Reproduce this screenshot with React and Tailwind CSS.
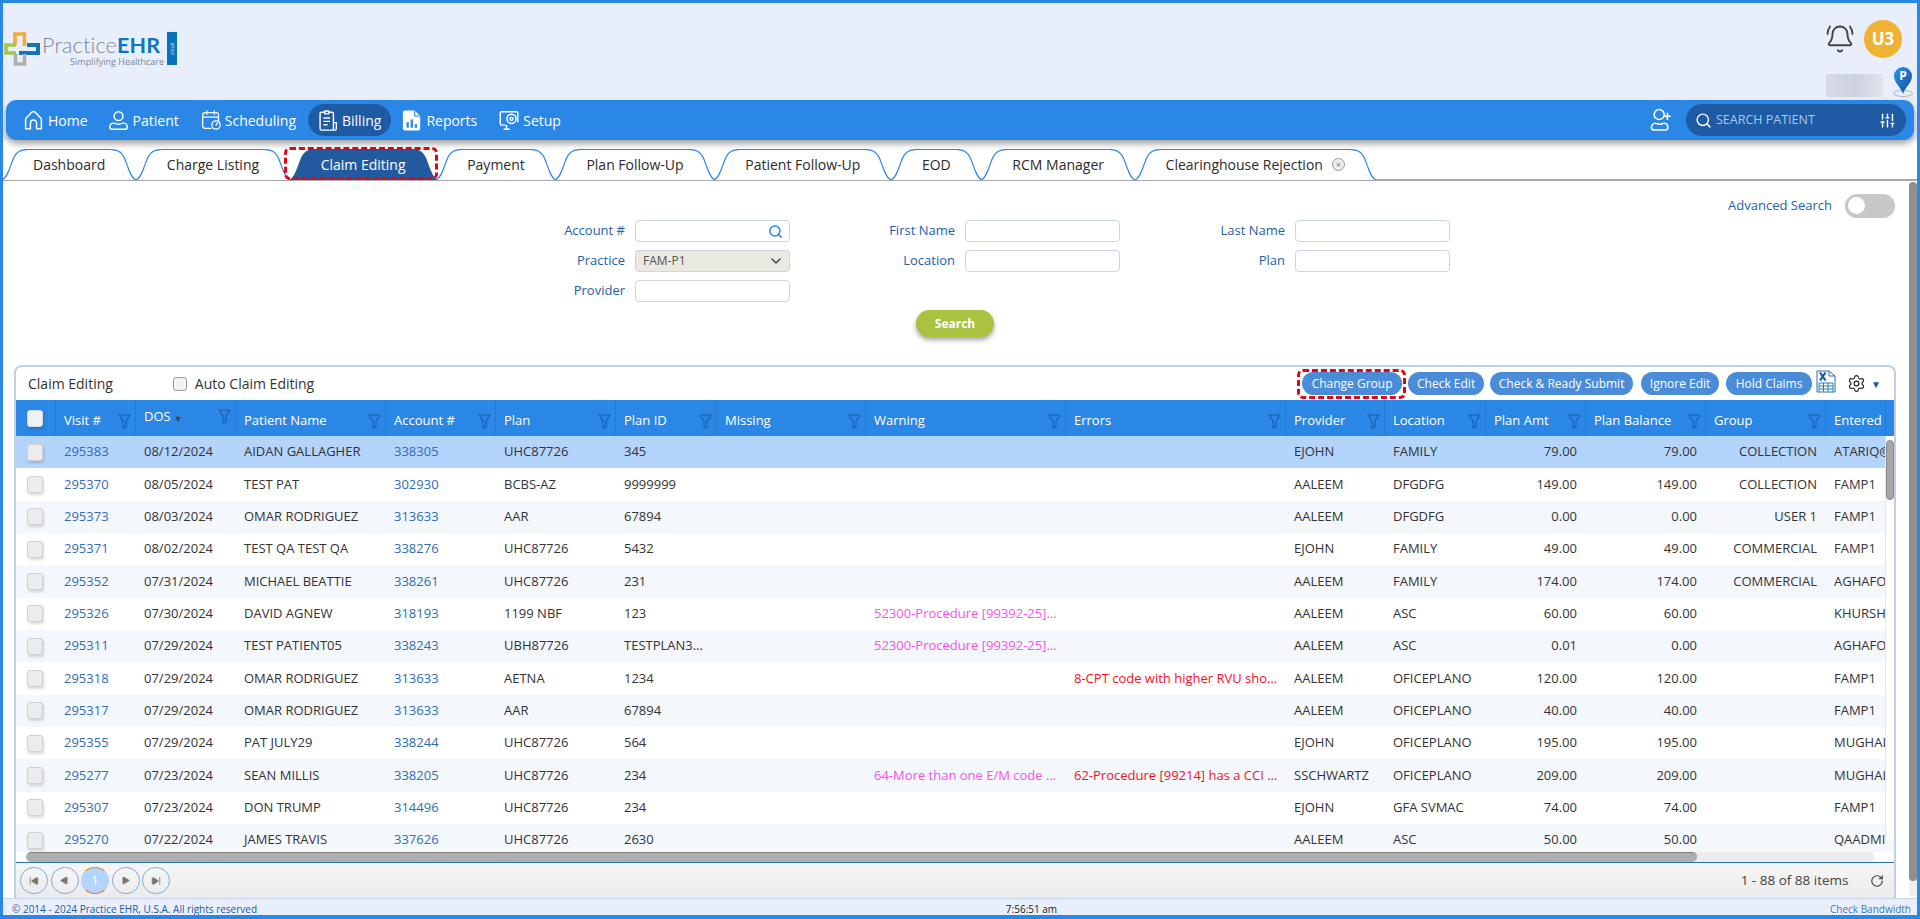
import React from "react";
import { BellRing, ChevronDown, Search, Settings, SlidersVertical, RotateCw, SkipBack, Play } from "lucide-react";

const GRID = "grid grid-cols-[40px_80px_100px_150px_110px_120px_101px_149px_200px_220px_99px_101px_100px_120px_120px_60px_1fr]";

const WARN = "52300-Procedure [99392-25]…";
const rows = [
  ["295383", "08/12/2024", "AIDAN GALLAGHER", "338305", "UHC87726", "345", "", "", "", "EJOHN", "FAMILY", "79.00", "79.00", "COLLECTION", "ATARIQ@PRACTICE"],
  ["295370", "08/05/2024", "TEST PAT", "302930", "BCBS-AZ", "9999999", "", "", "", "AALEEM", "DFGDFG", "149.00", "149.00", "COLLECTION", "FAMP1"],
  ["295373", "08/03/2024", "OMAR RODRIGUEZ", "313633", "AAR", "67894", "", "", "", "AALEEM", "DFGDFG", "0.00", "0.00", "USER 1", "FAMP1"],
  ["295371", "08/02/2024", "TEST QA TEST QA", "338276", "UHC87726", "5432", "", "", "", "EJOHN", "FAMILY", "49.00", "49.00", "COMMERCIAL", "FAMP1"],
  ["295352", "07/31/2024", "MICHAEL BEATTIE", "338261", "UHC87726", "231", "", "", "", "AALEEM", "FAMILY", "174.00", "174.00", "COMMERCIAL", "AGHAFOOR"],
  ["295326", "07/30/2024", "DAVID AGNEW", "318193", "1199 NBF", "123", "", WARN, "", "AALEEM", "ASC", "60.00", "60.00", "", "KHURSHID"],
  ["295311", "07/29/2024", "TEST PATIENT05", "338243", "UBH87726", "TESTPLAN3…", "", WARN, "", "AALEEM", "ASC", "0.01", "0.00", "", "AGHAFOOR"],
  ["295318", "07/29/2024", "OMAR RODRIGUEZ", "313633", "AETNA", "1234", "", "", "8-CPT code with higher RVU sho…", "AALEEM", "OFICEPLANO", "120.00", "120.00", "", "FAMP1"],
  ["295317", "07/29/2024", "OMAR RODRIGUEZ", "313633", "AAR", "67894", "", "", "", "AALEEM", "OFICEPLANO", "40.00", "40.00", "", "FAMP1"],
  ["295355", "07/29/2024", "PAT JULY29", "338244", "UHC87726", "564", "", "", "", "EJOHN", "OFICEPLANO", "195.00", "195.00", "", "MUGHAL"],
  ["295277", "07/23/2024", "SEAN MILLIS", "338205", "UHC87726", "234", "", "64-More than one E/M code …", "62-Procedure [99214] has a CCI …", "SSCHWARTZ", "OFICEPLANO", "209.00", "209.00", "", "MUGHAL"],
  ["295307", "07/23/2024", "DON TRUMP", "314496", "UHC87726", "234", "", "", "", "EJOHN", "GFA SVMAC", "74.00", "74.00", "", "FAMP1"],
  ["295270", "07/22/2024", "JAMES TRAVIS", "337626", "UHC87726", "2630", "", "", "", "AALEEM", "ASC", "50.00", "50.00", "", "QAADMIN"],
];

const headers = ["Visit #", "DOS", "Patient Name", "Account #", "Plan", "Plan ID", "Missing", "Warning", "Errors", "Provider", "Location", "Plan Amt", "Plan Balance", "Group", "Entered"];

const tabs = ["Dashboard", "Charge Listing", "Claim Editing", "Payment", "Plan Follow-Up", "Patient Follow-Up", "EOD", "RCM Manager", "Clearinghouse Rejection"];

function HomeIcon() {
  return (
    <svg width="21" height="22" viewBox="0 0 24 24" fill="none" stroke="white" strokeWidth="1.7" strokeLinejoin="round">
      <path d="M3 22V10.5L10 3.2a2.8 2.8 0 0 1 4 0l7 7.3V22h-5.5v-6.5a3.5 3.5 0 0 0-7 0V22z" />
    </svg>
  );
}
function UserIcon({ size = 21 }) {
  return (
    <svg width={size} height={size} viewBox="0 0 24 24" fill="none" stroke="white" strokeWidth="1.7">
      <circle cx="12" cy="7" r="5" />
      <path d="M2 19.5c0-3 2.5-4.500 5-4.500 1.500 0 3 1.200 5 1.200s3.500-1.200 5-1.200c2.500 0 5 1.500 5 4.500 0 1.500-1 2.500-2.500 2.500h-15C3 22 2 21 2 19.500z" />
    </svg>
  );
}
function ScheduleIcon() {
  return (
    <svg width="20" height="22" viewBox="0 0 24 24" fill="none" stroke="white" strokeWidth="1.5" strokeLinecap="round">
      <path d="M12 22H5a3 3 0 0 1-3-3V6a3 3 0 0 1 3-3h13a3 3 0 0 1 3 3v7" />
      <path d="M2 8.500h19M7 1v4M16 1v4" />
      <circle cx="18" cy="18" r="5" />
      <path d="M18 18l2-2.500" />
    </svg>
  );
}
function BillingIcon() {
  return (
    <svg width="20" height="23" viewBox="0 0 24 26" fill="none" stroke="white" strokeWidth="1.7" strokeLinejoin="round">
      <path d="M8 3H4a1.500 1.500 0 0 0-1.500 1.500V23A1.500 1.500 0 0 0 4 24.500h13A1.500 1.500 0 0 0 18.500 23V4.500A1.500 1.500 0 0 0 17 3h-4" />
      <path d="M8 1.500h5V5H8z" />
      <path d="M6.500 10h8M6.500 14h8M6.500 18h5" />
      <path d="M18.500 15.500h3.500V23a1.500 1.500 0 0 1-1.500 1.500H18" />
    </svg>
  );
}
function ReportsIcon() {
  return (
    <svg width="20" height="23" viewBox="0 0 22 24">
      <path d="M3 1h11l6 6v14a2 2 0 0 1-2 2H3a2 2 0 0 1-2-2V3a2 2 0 0 1 2-2z" fill="white" />
      <path d="M14 1v6h6" fill="none" stroke="#2b87e6" strokeWidth="1.2" />
      <path d="M5 14h2.500v6H5zM9.500 11H12v9H9.500zM14 16h2.500v4H14z" fill="#2b87e6" />
    </svg>
  );
}
function SetupIcon() {
  return (
    <svg width="20" height="23" viewBox="0 0 24 24" fill="none" stroke="white" strokeWidth="1.7" strokeLinejoin="round">
      <path d="M8 17.500H3a1.500 1.500 0 0 1-1.500-1.500V3A1.500 1.500 0 0 1 3 1.500h18A1.500 1.500 0 0 1 22.500 3v11" />
      <circle cx="15" cy="10" r="5.500" />
      <circle cx="15" cy="10" r="1.800" />
      <path d="M9 17.500v4M5.500 22.500H13" />
    </svg>
  );
}
function AddUserIcon() {
  return (
    <svg width="22" height="24" viewBox="0 0 24 26" fill="none" stroke="white" strokeWidth="1.700">
      <circle cx="10" cy="7" r="5.500" />
      <path d="M1.500 21c0-3 2.500-4.500 4.500-4.500 1.500 0 2.500 1.200 4.500 1.200s3-1.200 4.500-1.200c2.500 0 4.500 1.500 4.500 4.500 0 2-1 3-2.500 3H4c-1.500 0-2.500-1-2.500-3z" />
      <path d="M19 5v8M15.500 9h7" />
    </svg>
  );
}
function Funnel({ className = "" }) {
  return (
    <svg width="13" height="15" viewBox="0 0 14 16" fill="none" stroke="#1c5eaa" strokeWidth="1.300" strokeLinejoin="round" className={className}>
      <path d="M1 1h12L8.500 7.500V14l-3 1V7.500z" />
    </svg>
  );
}
function Excel() {
  return (
    <svg width="20" height="23" viewBox="0 0 20 23" fill="none">
      <path d="M1 1h12l6 5v16H1z" fill="#fff" stroke="#2a6fb0" strokeWidth="1" />
      <path d="M13 1v5h6" stroke="#2a6fb0" strokeWidth="1" />
      <path d="M4 2.500l5.500 8M9.500 2.500L4 10.500" stroke="#14589f" strokeWidth="2.200" />
      <path d="M3 13h14M3 16h14M3 19h14M3 13v8.500M7.500 13v8.500M12 13v8.500M17 13v8.500" stroke="#2a7ab8" strokeWidth="1" />
    </svg>
  );
}
function Pin() {
  return (
    <svg width="20" height="31" viewBox="0 0 20 31">
      <defs>
        <linearGradient id="pinGrad" x1="0" x2="1" y1="0" y2="1">
          <stop offset="0" stopColor="#2b93e6" />
          <stop offset="1" stopColor="#124f96" />
        </linearGradient>
      </defs>
      <ellipse cx="10" cy="27.500" rx="9.500" ry="3" fill="none" stroke="#9aa3b0" strokeWidth="0.800" />
      <path d="M10 28C8 21 1 17 1 10a9 9 0 0 1 18 0c0 7-7 11-9 18z" fill="url(#pinGrad)" />
      <text x="10" y="14" textAnchor="middle" fontSize="12" fontWeight="700" fill="#fff" fontFamily="Open Sans">P</text>
    </svg>
  );
}
function LogoCross() {
  return (
    <svg width="36" height="34" viewBox="0 0 36 34" fill="none" strokeWidth="3.600">
      <path d="M11 13V2h9.500v12" stroke="#f5a93b" />
      <path d="M12 13H2v8h10" stroke="#a4c93f" />
      <path d="M15 21h19v-8H23" stroke="#1773b8" strokeWidth="4" />
      <path d="M11.500 22v10h9v-10" stroke="#b0b0b0" />
    </svg>
  );
}

function NavItem({ icon, label, active, className = "" }) {
  return (
    <div className={"flex items-center gap-[4px] h-[32px] text-[14px] text-white " + (active ? "bg-[#1f5aa5] rounded-full px-[10px] " : "") + className}>
      {icon}
      <span>{label}</span>
    </div>
  );
}

function TabItem({ label, active, close, first }) {
  const stroke = "#2b87e6";
  const fill = active ? "#23599f" : "#ffffff";
  return (
    <div className={"flex h-[31px] -mr-[0.4px] " + (first ? "-ml-[1px]" : "")}>
      <svg width="25" height="31" viewBox="0 0 25 31" className="shrink-0">
        <path d="M0 31C5 29 7 21 10 13 13 4 17 .6 25 .6V31z" fill={fill} />
        <path d="M0 31C5 29 7 21 10 13 13 4 17 .6 25 .6" fill="none" stroke={active ? fill : stroke} strokeWidth="1.200" />
      </svg>
      <div className={"flex items-center gap-[9px] px-[6px] pb-[2px] border-t-[1.200px] text-[14px] " + (active ? "bg-[#23599f] border-[#23599f] text-white" : "bg-white border-[#2b87e6] text-[#2b2b2b]")}>
        <span>{label}</span>
        {close && (
          <span className="w-[13px] h-[13px] rounded-full border border-[#9a9a9a] bg-[#ededed] flex items-center justify-center text-[9px] leading-none text-[#777]">×</span>
        )}
      </div>
      <svg width="25" height="31" viewBox="0 0 25 31" className="shrink-0">
        <path d="M0 .6C8 .6 12 4 15 13 18 21 20 29 25 31H0z" fill={fill} />
        <path d="M0 .6C8 .6 12 4 15 13 18 21 20 29 25 31" fill="none" stroke={active ? fill : stroke} strokeWidth="1.200" />
      </svg>
    </div>
  );
}

function Field({ label, children }) {
  return (
    <div className="flex items-center">
      <label className="w-[165px] text-right text-[13px] text-[#2561a9] pr-[10px]">{label}</label>
      {children}
    </div>
  );
}
const inputCls = "w-[155px] h-[22px] border border-[#ccd3e6] rounded-[4px] bg-white";

function ToolBtn({ label, w }) {
  return (
    <button className={"h-[23px] rounded-full bg-[#4a8cd8] text-white text-[12px] flex items-center justify-center " + w}>{label}</button>
  );
}

function Check({ header }) {
  return (
    <span className={"block w-[16px] h-[17px] rounded-[3px] border shadow-[1px_2px_3px_rgba(0,0,0,0.15)] " + (header ? "bg-[#eef1f5] border-[#d5dae2]" : "bg-[#ececec] border-[#d0d0d0]")} />
  );
}

function PageBtn({ children, active }) {
  return (
    <div className={"w-[28px] h-[27px] rounded-full flex items-center justify-center " + (active ? "bg-[#b3d4fc] border border-[#f07a2a] border-x-[#b3d4fc] text-white text-[13px]" : "border border-[#7fa8d8]")}>
      {children}
    </div>
  );
}

export default function App() {
  return (
    <div className="w-[1920px] h-[919px] overflow-hidden border-[3px] border-b-4 border-[#2b87e6] bg-[#e8effb] flex flex-col font-['Open_Sans',sans-serif] relative">
      {/* Header */}
      <div className="h-[97px] shrink-0 flex justify-between">
        <div className="flex items-start pt-[29px] pl-[1px]">
          <LogoCross />
          <div className="flex flex-col ml-[2px] w-[122px] pt-[3px]">
            <div className="flex items-baseline leading-[20px] h-[21px] text-[21.500px] font-['Lato',sans-serif] tracking-[0.2px]">
              <span className="text-[#7d8791] font-light">Practice</span>
              <span className="text-[#0f75bc] font-bold">EHR</span>
            </div>
            <div className="text-[9px] leading-[11px] text-[#7d8791] text-right">Simplifying Healthcare</div>
          </div>
          <div className="ml-[3px] w-[10px] h-[33px] bg-[#0a72ba] flex items-center justify-center overflow-hidden">
            <span className="text-[5px] text-[#cfe6f7] -rotate-90 whitespace-nowrap">cloud</span>
          </div>
        </div>
        <div className="flex flex-col items-end pr-[4px] pt-[17px]">
          <div className="flex items-center gap-[9px] pr-[11px]">
            <BellRing size={30} strokeWidth={1.500} className="text-[#444]" />
            <div className="w-[38px] h-[38px] rounded-full bg-[#f0b233] flex items-center justify-center text-white font-bold text-[17px]">U3</div>
          </div>
          <div className="flex items-end gap-[10px] mt-[8px]">
            <div className="w-[57px] h-[23px] bg-gradient-to-r from-[#d6dbe6] via-[#ccd2df] to-[#dfe3ec]" />
            <Pin />
          </div>
        </div>
      </div>

      {/* Nav */}
      <div className="h-[40px] shrink-0 mx-[3px] bg-[#2b87e6] rounded-[10px] shadow-[0_4px_6px_rgba(0,0,0,0.35)] flex items-center justify-between pl-[17px] pr-[8px] relative z-10">
        <div className="flex items-center">
          <NavItem icon={<HomeIcon />} label="Home" />
          <NavItem icon={<UserIcon />} label="Patient" className="ml-[20px]" />
          <NavItem icon={<ScheduleIcon />} label="Scheduling" className="ml-[22px]" />
          <NavItem icon={<BillingIcon />} label="Billing" active className="ml-[12px]" />
          <NavItem icon={<ReportsIcon />} label="Reports" className="ml-[11px]" />
          <NavItem icon={<SetupIcon />} label="Setup" className="ml-[22px]" />
        </div>
        <div className="flex items-center gap-[14px]">
          <AddUserIcon />
          <div className="w-[220px] h-[32px] rounded-full bg-[#1f5aa5] flex items-center pl-[9px] pr-[10px] text-white">
            <Search size={17} strokeWidth={2} />
            <span className="ml-[4px] text-[12.500px] text-[#a9c8ee]">SEARCH PATIENT</span>
            <SlidersVertical size={17} strokeWidth={2} className="ml-auto" />
          </div>
        </div>
      </div>

      {/* Main */}
      <div className="flex-1 bg-white flex flex-col min-h-0 relative">
        <div className="flex pt-[9px] h-[41px] shrink-0 border-b-2 border-[#a8a8a8] bg-white">
          {tabs.map((t, i) => (
            <TabItem key={t} label={t} active={t === "Claim Editing"} close={i === tabs.length - 1} first={i === 0} />
          ))}
        </div>
        <div className="absolute left-[281px] top-[7px] w-[154px] h-[33px] border-[3px] border-dashed border-[#e30613] rounded-[6px]" />

        {/* Advanced */}
        <div className="flex justify-end items-center pt-[13px] pr-[22px] h-[36px] shrink-0">
          <span className="text-[13px] text-[#2561a9] mr-[13px]">Advanced Search</span>
          <div className="w-[50px] h-[24px] rounded-full bg-[#c8c8c8] flex items-center pl-[3px]">
            <span className="w-[17px] h-[17px] rounded-full bg-white" />
          </div>
        </div>

        {/* Form */}
        <div className="flex justify-center pl-[10px] pt-[3px]">
          <div className="grid grid-cols-[330px_330px_330px] gap-y-[8px]">
            <Field label="Account #">
              <div className={inputCls + " flex items-center justify-end pr-[6px]"}>
                <Search size={15} strokeWidth={2.400} className="text-[#2b87e6]" />
              </div>
            </Field>
            <Field label="First Name"><input className={inputCls} /></Field>
            <Field label="Last Name"><input className={inputCls} /></Field>
            <Field label="Practice">
              <div className={"w-[155px] h-[22px] border border-[#ccd3e6] rounded-[4px] bg-[#eae9e2] flex items-center justify-between pl-[7px] pr-[5px] text-[12px] text-[#555]"}>
                <span>FAM-P1</span>
                <ChevronDown size={16} strokeWidth={2.200} className="text-[#444]" />
              </div>
            </Field>
            <Field label="Location"><input className={inputCls} /></Field>
            <Field label="Plan"><input className={inputCls} /></Field>
            <Field label="Provider"><input className={inputCls} /></Field>
          </div>
        </div>
        <div className="flex justify-center pr-[10px] mt-[8px]">
          <button className="w-[78px] h-[27px] rounded-full bg-[#a9c23f] text-white font-bold text-[12px] shadow-[0_3px_5px_rgba(0,0,0,0.35)]">Search</button>
        </div>

        {/* Panel */}
        <div className="mt-[28px] ml-[11px] mr-[21px] flex-1 min-h-0 border-2 border-b-0 border-[#bcd0ea] rounded-t-[8px] flex flex-col relative overflow-hidden">
          <div className="h-[33px] shrink-0 flex items-center pl-[12px] pr-[13px] text-[14px] text-[#333]">
            <span>Claim Editing</span>
            <span className="ml-[60px]"><span className="block w-[14px] h-[14px] rounded-[3px] bg-[#f2f2f2] border border-[#9a9a9a]" /></span>
            <span className="ml-[8px]">Auto Claim Editing</span>
            <div className="ml-auto flex items-center">
              <ToolBtn label="Change Group" w="w-[100px]" />
              <ToolBtn label="Check Edit" w="w-[76px] ml-[6px]" />
              <ToolBtn label="Check & Ready Submit" w="w-[143px] ml-[6px]" />
              <ToolBtn label="Ignore Edit" w="w-[78px] ml-[8px]" />
              <ToolBtn label="Hold Claims" w="w-[86px] ml-[7px]" />
              <span className="ml-[4px] -mt-[5px]"><Excel /></span>
              <Settings size={19} strokeWidth={1.500} className="ml-[11px] text-[#222]" />
              <span className="ml-[5px] text-[#1f5aa5] text-[10px] leading-none">▼</span>
            </div>
          </div>

          {/* Header row */}
          <div className={GRID + " h-[36px] shrink-0 bg-[#2b87e6] text-white text-[13px]"}>
            <div className="border-r border-[#2a78cf] flex items-center pl-[11px]"><Check header /></div>
            {headers.map((h) => (
              <div key={h} className="border-r border-[#2a78cf] relative flex items-center pl-[8px] pt-[6px] overflow-hidden">
                {h === "DOS" ? (
                  <span className="-mt-[8px] flex items-center gap-[3px]">DOS<span className="text-[#444] text-[9px] mt-[4px]">▼</span></span>
                ) : (
                  <span>{h}</span>
                )}
                {h !== "Entered" && <Funnel className={"absolute right-[4px] " + (h === "DOS" ? "top-[9px]" : "top-[14px]")} />}
              </div>
            ))}
            <div />
          </div>

          {/* Rows */}
          <div className="flex-1 min-h-0 overflow-hidden relative">
            <div className="h-[416px] overflow-hidden">
              {rows.map((r, i) => (
                <div key={r[0]} className={GRID + " h-[32.330px] items-center text-[13px] text-[#333] " + (i === 0 ? "bg-[#b3d4fc]" : i % 2 === 0 ? "bg-[#f4f8fd]" : "bg-white")}>
                  <div className="pl-[11px]"><Check /></div>
                  <div className="pl-[8px] text-[#2f6db5]">{r[0]}</div>
                  <div className="pl-[8px]">{r[1]}</div>
                  <div className="pl-[8px] whitespace-nowrap">{r[2]}</div>
                  <div className="pl-[8px] text-[#2f6db5]">{r[3]}</div>
                  <div className="pl-[8px]">{r[4]}</div>
                  <div className="pl-[8px] whitespace-nowrap">{r[5]}</div>
                  <div />
                  <div className="pl-[8px] text-[#fb4fee] whitespace-nowrap">{r[7]}</div>
                  <div className="pl-[8px] text-[#f5101f] whitespace-nowrap">{r[8]}</div>
                  <div className="pl-[8px]">{r[9]}</div>
                  <div className="pl-[8px]">{r[10]}</div>
                  <div className="text-right pr-[9px]">{r[11]}</div>
                  <div className="text-right pr-[9px]">{r[12]}</div>
                  <div className="text-right pr-[9px]">{r[13]}</div>
                  <div className="pl-[8px] overflow-hidden whitespace-nowrap">{r[14]}</div>
                  <div />
                </div>
              ))}
            </div>
            {/* horizontal scrollbar */}
            <div className="h-[10px] ml-[10px] mr-[19px] bg-[#ececec] rounded-full overflow-hidden">
              <div className="h-full w-[1671px] bg-[#aeaeae] border-t border-[#808080] rounded-full" />
            </div>
            <div className="h-px bg-[#2a6fb0]" />
            {/* pager */}
            <div className="h-[35px] bg-gradient-to-b from-[#f6f6f6] to-[#ebebeb] flex items-center pl-[4px] pr-[10px] gap-[2.500px]">
              <PageBtn>
                <SkipBack size={10} fill="#777" stroke="#777" />
              </PageBtn>
              <PageBtn>
                <Play size={9} fill="#777" stroke="#777" className="rotate-180" />
              </PageBtn>
              <PageBtn active>1</PageBtn>
              <PageBtn>
                <Play size={9} fill="#777" stroke="#777" />
              </PageBtn>
              <PageBtn>
                <SkipBack size={10} fill="#777" stroke="#777" className="rotate-180" />
              </PageBtn>
              <span className="ml-auto text-[13.500px] text-[#444]">1 - 88 of 88 items</span>
              <RotateCw size={14} strokeWidth={2} className="ml-[19px] text-[#444]" />
            </div>
            {/* vertical thumb */}
            <div className="absolute right-0 top-0 w-[9px] h-[405px] bg-white border-l border-[#e5e5e5] rounded-b-full">
              <div className="mt-[4px] h-[60px] bg-[#a6a6a6] border border-[#8a8a8a] rounded-full" />
            </div>
          </div>
        </div>
        <div className="absolute left-[1294px] top-[229px] w-[109px] h-[30px] border-[3px] border-dashed border-[#e30613] rounded-[6px]" />
        {/* page scrollbar */}
        <div className="absolute right-0 top-[42px] w-[8px] h-[714px] bg-[#eeeeee] rounded-full">
          <div className="h-[699px] bg-[#8f8f8f] rounded-full" />
        </div>
      </div>

      {/* Footer */}
      <div className="h-[17px] shrink-0 border-t border-[#c5d3e8] bg-[#e8effb] grid grid-cols-3 items-center pl-[9px] pr-[6px] pt-[3px] text-[10px] text-[#1f5aa5] leading-none">
        <span>© 2014 - 2024 Practice EHR, U.S.A. All rights reserved</span>
        <span className="text-center text-[#222] pl-[140px]">7:56:51 am</span>
        <span className="text-right text-[#3c78c0]">Check Bandwidth</span>
      </div>
    </div>
  );
}
